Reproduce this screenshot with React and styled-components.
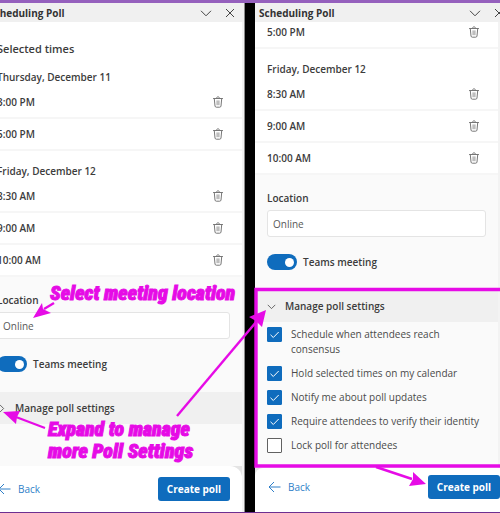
import React, { useState } from "react";
import styled, { createGlobalStyle } from "styled-components";

const GlobalStyle = createGlobalStyle`
  * {
    box-sizing: border-box;
  }
  body {
    margin: 0;
    padding: 0;
    background-color: #000;
    font-family: "Segoe UI", "Open Sans", "Noto Sans", sans-serif;
    font-size: 10px;
    line-height: 16px;
    color: #3c3c3c;
  }
  button, input {
    font-family: inherit;
    font-size: inherit;
    color: inherit;
  }
`;

const Page = styled.main`
  position: relative;
  display: grid;
  grid-template-columns: 1fr 1fr;
  gap: 10px;
  min-height: 100vh;
  overflow: hidden;
  background-color: #000;
  border-top: 3px solid #9560bd;
  border-bottom: 1px solid #6d2f91;
`;

// $cut is the side on which the pane runs out of view
const Panel = styled.section`
  display: flex;
  flex-direction: column;
  overflow: hidden;
  background-color: #f3f3f3;
  border-right: ${(p) => (p.$cut === "left" ? "1px solid #8c8c8c" : "none")};
`;

const Header = styled.header`
  display: flex;
  align-items: center;
  gap: 12px;
  height: 19px;
  padding: 0 8px 0 4px;
  margin-left: ${(p) => (p.$cut === "left" ? "-15px" : "0")};
  margin-right: ${(p) => (p.$cut === "right" ? "-13px" : "0")};
  background-color: #f0f0f0;
`;

const Title = styled.h1`
  flex: 1;
  margin: 0;
  font-size: 10px;
  font-weight: 700;
  color: #333;
`;

const IconButton = styled.button`
  display: flex;
  align-items: center;
  padding: 0;
  border: none;
  background: none;
  color: ${(p) => p.$color || "#444"};
  cursor: pointer;
`;

const Body = styled.div`
  flex: 1;
  overflow: hidden;
  margin-right: 2px;
  margin-left: ${(p) => (p.$cut === "left" ? "-15px" : "0")};
  background-color: #fafafa;
`;

const Times = styled.div`
  margin-top: ${(p) => (p.$scrolled ? "-5px" : "0")};
  background-color: #fff;
`;

const Heading = styled.h2`
  margin: 0;
  padding: 19px 12px 0;
  font-size: 11px;
  font-weight: 600;
`;

const Day = styled.h3`
  margin: 0;
  padding: 12px 12px 2px;
  font-size: 10px;
  font-weight: 600;
`;

const TimeList = styled.ul`
  margin: 0;
  padding: 0;
  list-style: none;
`;

const TimeRow = styled.li`
  display: flex;
  align-items: center;
  justify-content: space-between;
  height: 32px;
  padding: 0 19px 0 12px;
  border-bottom: 2px solid #f6f6f6;
  font-weight: 600;
`;

const Options = styled.div`
  display: flex;
  flex-direction: column;
  padding: 15px 12px 20px;
`;

const FieldLabel = styled.label`
  font-weight: 600;
`;

const TextInput = styled.input`
  width: 100%;
  height: 27px;
  margin: 4px 0 17px;
  padding: 0 5px;
  border: 1px solid #e4e4e4;
  border-radius: 3px;
  background-color: #fff;
  color: #585858;
`;

const SwitchLabel = styled.label`
  display: flex;
  align-items: center;
  gap: 6px;
  font-weight: 600;
`;

const Switch = styled.input`
  appearance: none;
  display: flex;
  align-items: center;
  width: 30px;
  height: 16px;
  margin: 0;
  padding: 0 3px;
  border-radius: 8px;
  background-color: #8a8a8a;

  &::before {
    content: "";
    width: 9px;
    height: 9px;
    border-radius: 50%;
    background-color: #fff;
  }
  &:checked {
    justify-content: flex-end;
    background-color: #0f6cbd;
  }
`;

const SettingsToggle = styled.button`
  display: flex;
  align-items: center;
  gap: 9px;
  width: 100%;
  height: 32px;
  padding: 0 12px;
  border: none;
  background-color: #f0f0f0;
  font-weight: 600;
  color: #3c3c3c;
`;

const CheckList = styled.div`
  display: flex;
  flex-direction: column;
  gap: 9px;
  padding: 5px 12px 0;
`;

const CheckRow = styled.label`
  display: flex;
  align-items: flex-start;
  gap: 9px;
  line-height: 15px;
  color: #4a4a4a;
`;

const CheckText = styled.span`
  max-width: 194px;
`;

const CheckWrap = styled.span`
  position: relative;
  flex: none;
  display: flex;

  svg {
    position: absolute;
    inset: 0;
    pointer-events: none;
  }
`;

const Checkbox = styled.input`
  appearance: none;
  width: 15px;
  height: 15px;
  margin: 0;
  border: 1px solid #616161;
  border-radius: 1px;
  background-color: #fff;

  &:checked {
    border-color: #0f6cbd;
    background-color: #0f6cbd;
  }
`;

const FooterBack = styled.div`
  margin-right: 2px;
  background-color: #e4e4e4;
`;

const Footer = styled.footer`
  display: flex;
  align-items: center;
  justify-content: space-between;
  height: ${(p) => (p.$cut === "left" ? "46px" : "44px")};
  padding: ${(p) => (p.$cut === "left" ? "0 12px 0 13px" : "0 12px 6px 13px")};
  margin-left: ${(p) => (p.$cut === "left" ? "-15px" : "0")};
  margin-right: ${(p) => (p.$cut === "right" ? "-14px" : "0")};
  border-radius: 8px 12px 0 0;
  background-color: #fff;
`;

const BackLink = styled.a`
  display: flex;
  align-items: center;
  gap: 7px;
  color: #2f7fc8;
  text-decoration: none;
`;

const CreateButton = styled.button`
  height: 24px;
  width: 72px;
  padding: 0;
  border: none;
  border-radius: 3px;
  background-color: #0f6cbd;
  color: #fff;
  font-weight: 700;
`;

const Markup = styled.div`
  position: absolute;
  top: -3px;
  left: 0;
  width: 500px;
  height: 513px;
  pointer-events: none;
`;

const Note = styled.p`
  position: absolute;
  top: ${(p) => p.$top}px;
  left: ${(p) => p.$left}px;
  margin: 0;
  font-family: Impact, "Roboto Condensed", Roboto, sans-serif;
  font-size: 20px;
  line-height: 22px;
  font-style: italic;
  font-weight: 900;
  white-space: nowrap;
  color: #e60be6;
  -webkit-text-stroke: 1px #e60be6;
`;

const ChevronDown = ({ size = 12 }) => (
  <svg width={size} height={size} viewBox="0 0 12 12" fill="none" stroke="currentColor">
    <path d="M1 3.8 L6 8.8 L11 3.8" />
  </svg>
);

const ChevronRight = () => (
  <svg width="9" height="9" viewBox="0 0 12 12" fill="none" stroke="currentColor">
    <path d="M3.8 1 L8.8 6 L3.8 11" />
  </svg>
);

const CloseIcon = () => (
  <svg width="12" height="12" viewBox="0 0 12 12" fill="none" stroke="currentColor">
    <path d="M2 2 L10 10 M10 2 L2 10" />
  </svg>
);

const TrashIcon = () => (
  <svg width="10" height="12" viewBox="0 0 10 12" fill="none" stroke="currentColor" strokeLinecap="round">
    <path d="M0.5 2.5 H9.5 M3.4 2.3 C3.4 0.2 6.6 0.2 6.6 2.3 M1.3 2.7 L2 10 C2.1 10.8 2.6 11.2 3.3 11.2 H6.7 C7.4 11.2 7.9 10.8 8 10 L8.7 2.7" />
    <path d="M4.1 4.8 V8.8 M5.9 4.8 V8.8" strokeWidth="0.8" />
  </svg>
);

const ArrowLeft = () => (
  <svg width="13" height="12" viewBox="0 0 13 12" fill="none" stroke="currentColor">
    <path d="M6 1 L1 6 L6 11 M1 6 H12.5" />
  </svg>
);

const CheckMark = () => (
  <svg width="15" height="15" viewBox="0 0 15 15" fill="none" stroke="#fff">
    <path d="M3.5 7.8 L6.3 10.5 L11.7 5" />
  </svg>
);

const DaySlots = ({ day, times }) => (
  <>
    {day && <Day>{day}</Day>}
    <TimeList>
      {times.map((time) => (
        <TimeRow key={time}>
          {time}
          <IconButton type="button" $color="#777" aria-label={`Remove ${time}`}>
            <TrashIcon />
          </IconButton>
        </TimeRow>
      ))}
    </TimeList>
  </>
);

const Check = ({ label, checked }) => {
  const [on, setOn] = useState(checked);
  return (
    <CheckRow>
      <CheckWrap>
        <Checkbox type="checkbox" checked={on} onChange={() => setOn(!on)} />
        {on && <CheckMark />}
      </CheckWrap>
      <CheckText>{label}</CheckText>
    </CheckRow>
  );
};

const settings = [
  { label: "Schedule when attendees reach consensus", checked: true },
  { label: "Hold selected times on my calendar", checked: true },
  { label: "Notify me about poll updates", checked: true },
  { label: "Require attendees to verify their identity", checked: true },
  { label: "Lock poll for attendees", checked: false },
];

const PollPanel = ({ id, cut, title, slots, startOpen }) => {
  const [open, setOpen] = useState(startOpen);
  return (
    <Panel $cut={cut}>
      <Header $cut={cut}>
        <Title>Scheduling Poll</Title>
        <IconButton type="button" aria-label="Collapse">
          <ChevronDown />
        </IconButton>
        <IconButton type="button" aria-label="Close">
          <CloseIcon />
        </IconButton>
      </Header>
      <Body $cut={cut}>
        <Times $scrolled={!title}>
          {title && <Heading>{title}</Heading>}
          {slots.map((slot) => (
            <DaySlots key={slot.times[0]} {...slot} />
          ))}
        </Times>
        <Options>
          <FieldLabel htmlFor={`${id}-location`}>Location</FieldLabel>
          <TextInput id={`${id}-location`} type="text" defaultValue="Online" />
          <SwitchLabel>
            <Switch type="checkbox" role="switch" defaultChecked />
            Teams meeting
          </SwitchLabel>
        </Options>
        <SettingsToggle type="button" aria-expanded={open} onClick={() => setOpen(!open)}>
          {open ? <ChevronDown size={9} /> : <ChevronRight />}
          Manage poll settings
        </SettingsToggle>
        {open && (
          <CheckList>
            {settings.map((s) => (
              <Check key={s.label} {...s} />
            ))}
          </CheckList>
        )}
      </Body>
      <FooterBack>
        <Footer $cut={cut}>
          <BackLink href="#back">
            <ArrowLeft />
            Back
          </BackLink>
          <CreateButton type="button">Create poll</CreateButton>
        </Footer>
      </FooterBack>
    </Panel>
  );
};

const App = () => {
  return (
    <>
      <GlobalStyle />
      <Page>
        <PollPanel
          id="before"
          cut="left"
          title="Selected times"
          startOpen={false}
          slots={[
            { day: "Thursday, December 11", times: ["3:00 PM", "5:00 PM"] },
            { day: "Friday, December 12", times: ["8:30 AM", "9:00 AM", "10:00 AM"] },
          ]}
        />
        <PollPanel
          id="after"
          cut="right"
          startOpen
          slots={[
            { times: ["5:00 PM"] },
            { day: "Friday, December 12", times: ["8:30 AM", "9:00 AM", "10:00 AM"] },
          ]}
        />
        <Markup>
          <svg width="500" height="513" viewBox="0 0 500 513" fill="none" stroke="#e60be6">
            <path d="M502 289.5 H256 V466 H502" strokeWidth="3.4" />
            <path d="M54 303 L44 309" strokeWidth="2.4" />
            <path d="M33 318 L42 303 L43 309 L51 313 Z" fill="#e60be6" stroke="none" />
            <path d="M45 428 L16 417" strokeWidth="2.2" />
            <path d="M3 412 L20 411 L17 417 L16 424 Z" fill="#e60be6" stroke="none" />
            <path d="M177 416 L257 321" strokeWidth="2.4" />
            <path d="M266 310 L262 327 L256 321 L249 317 Z" fill="#e60be6" stroke="none" />
            <path d="M376 467 L412 479" strokeWidth="2.4" />
            <path d="M426 484 L409 486 L413 479 L413 472 Z" fill="#e60be6" stroke="none" />
          </svg>
          <Note $top={282} $left={50}>Select meeting location</Note>
          <Note $top={418} $left={48}>
            Expand to manage
            <br />
            more Poll Settings
          </Note>
        </Markup>
      </Page>
    </>
  );
};

export default App;
